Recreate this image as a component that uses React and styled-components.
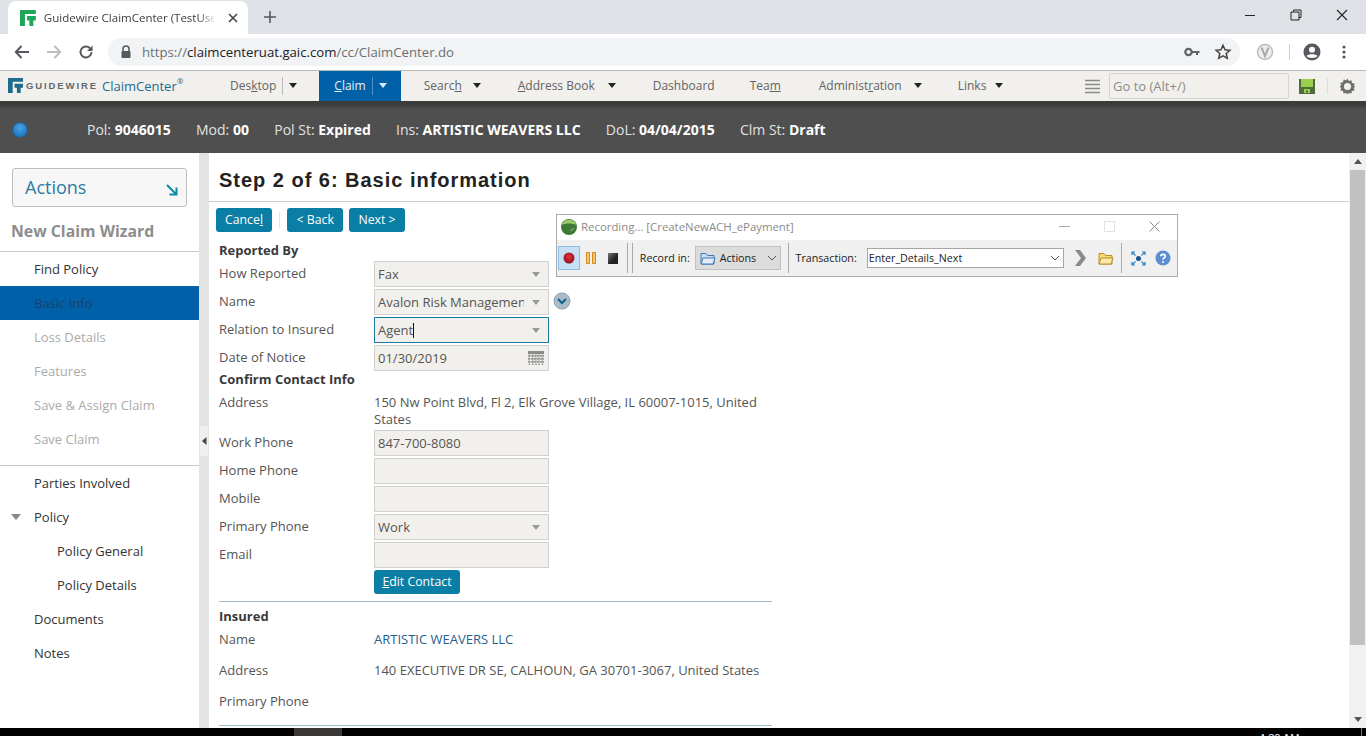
import React from 'react';
import styled, { createGlobalStyle } from 'styled-components';

const Global = createGlobalStyle`
  html, body { margin: 0; padding: 0; height: 736px; overflow: hidden; background: #fff; }
  body { font-family: "Open Sans", "Liberation Sans", sans-serif; font-size: 13px; color: #444; }
  * { box-sizing: border-box; }
  u { text-underline-offset: 1px; }
`;

const Page = styled.div`position: relative; width: 1366px; height: 736px; display: flex; flex-direction: column; overflow: hidden;`;

/* browser chrome */
const TabStrip = styled.div`height: 34px; flex: none; background: #dee1e6; display: flex; align-items: flex-end; padding-left: 8px; position: relative;`;
const Tab = styled.div`width: 240px; height: 33px; background: #fff; border-radius: 8px 8px 0 0; display: flex; align-items: center; padding: 0 10px 0 12px; gap: 8px;`;
const TabTitle = styled.div`width: 172px; white-space: nowrap; overflow: hidden; font-size: 11.5px; color: #3c4043; -webkit-mask-image: linear-gradient(to right, #000 155px, transparent 172px); mask-image: linear-gradient(to right, #000 155px, transparent 172px);`;
const TabClose = styled.div`margin-left: 6px; display: flex;`;
const NewTab = styled.div`margin: 0 0 8px 15px; display: flex; height: 18px;`;
const WinControls = styled.div`margin-left: auto; align-self: flex-start; display: flex; height: 30px; align-items: center; padding-right: 1px;`;
const WinBtn = styled.div`width: 46px; display: flex; justify-content: center;`;

const BrowserBar = styled.div`height: 37px; flex: none; background: #fff; display: flex; align-items: center; padding: 0 0 0 12px; border-bottom: 1px solid #b9b9b9;`;
const NavIcon = styled.div`width: 20px; height: 20px; display: flex; align-items: center; justify-content: center; margin-right: 12px;`;
const Omni = styled.div`width: 1132px; height: 28px; background: #f1f3f4; border-radius: 14px; display: flex; align-items: center; padding: 0 8px 0 12px; margin-left: 0;`;
const Url = styled.div`margin-left: 10px; font-size: 13.2px; color: #6b6f73; white-space: nowrap;  b { font-weight: 400; color: #202124; }`;
const OmniRight = styled.div`margin-left: auto; display: flex; align-items: center; gap: 14px;`;
const ExtArea = styled.div`display: flex; align-items: center; margin-left: 16px;`;
const ExtSep = styled.div`width: 1px; height: 16px; background: #d0d0d0; margin: 0 13px 0 15px;`;

/* app nav */
const AppNav = styled.div`height: 30px; flex: none; background: #f2f0ec; display: flex; align-items: stretch; color: #666;`;
const Brand = styled.div`width: 208px; display: flex; align-items: center; padding: 0 0 1px 8px;`;
const BrandWord = styled.span`margin-left: 3px; font-family: "Liberation Sans", sans-serif; font-weight: 700; font-size: 9.5px; letter-spacing: 1.9px; color: #5d6b73;`;
const BrandProduct = styled.span`margin-left: 4px; font-size: 13px; color: #1d6c8f; white-space: nowrap; sup { font-size: 8px; line-height: 0; position: relative; top: -1px; vertical-align: super; }`;
const NavItem = styled.div`display: flex; align-items: center; padding: 0 ${p => p.$pr ?? 16}px 1px ${p => p.$pl ?? 20}px; background: ${p => (p.$active ? '#0060a8' : 'transparent')}; color: ${p => (p.$active ? '#e6f0f8' : '#636363')}; font-size: 12px; white-space: nowrap;`;
const NavSep = styled.span`width: 1px; height: 18px; margin: 0 6px; background: ${p => (p.$light ? '#4d8fc2' : '#bbb')};`;
const Caret = styled.span`width: 0; height: 0; margin-left: ${p => p.$ml ?? 0}px; border-left: 4.5px solid transparent; border-right: 4.5px solid transparent; border-top: 5px solid ${p => p.$c || '#222'};`;
const NavRight = styled.div`margin-left: auto; display: flex; align-items: center; padding-right: 10px;`;
const GoTo = styled.div`width: 180px; height: 26px; margin: 0 10px 0 9px; border: 1px solid #d6d4d0; border-radius: 2px; padding: 0 3px; display: flex; align-items: center; font-size: 13px; color: #8b8b8b;`;
const ToolSep = styled.div`width: 1px; height: 16px; background: #ddd; margin: 0 11px 0 12px;`;

/* info bar */
const InfoBar = styled.div`height: 52px; flex: none; background: linear-gradient(#3b3b3b 0, #3b3b3b 4px, #444 5px, #4f4f4f 9px); display: flex; align-items: center; gap: 25.3px; padding: 5px 0 0 12px; color: #e2e2e2; font-size: 14px; white-space: nowrap; b { color: #fff; font-weight: 700; }`;
const Dot = styled.div`width: 16px; height: 16px; border-radius: 50%; margin-right: 33.7px; background: radial-gradient(circle at 50% 35%, #4ba3e8, #1f78c4 70%); border: 1px solid #2a5a80;`;

/* main */
const Main = styled.div`flex: 1; min-height: 0; display: flex;`;
const Side = styled.div`width: 199px; flex: none; background: #fff; padding-top: 15px;`;
const ActionsBox = styled.div`width: 175px; height: 39px; margin-left: 12px; background: #f7f7f7; border: 1px solid #bdbdbd; border-radius: 3px; padding: 0 8px 2px 12px; display: flex; align-items: center; justify-content: space-between; font-size: 18px; color: #2b7da0;`;
const WizardTitle = styled.div`margin: 12px 0 0 11px; height: 32px; line-height: 24px; font-size: 15.8px; font-weight: 700; color: #8d8d8d;`;
const SideList = styled.div`border-top: 1px solid #c8c8c8; padding-bottom: 9px; &+& { padding-bottom: 0; }`;
const SideItem = styled.div`height: 34px; display: flex; align-items: center; padding-left: ${p => p.$nested ? 57 : 34}px; position: relative; font-size: 13px; color: ${p => ({ on: '#333', dim: '#aaa', cur: '#1a4468' }[p.$tone] || '#333')}; background: ${p => p.$tone === 'cur' ? '#0060a8' : 'transparent'};`;
const Tri = styled.span`position: absolute; left: 11px; top: 14px; width: 0; height: 0; border-left: 5px solid transparent; border-right: 5px solid transparent; border-top: 6px solid #888;`;
const Splitter = styled.div`width: 10px; flex: none; background: #e3e3e3; display: flex; align-items: center;`;
const Handle = styled.div`width: 8px; height: 30px; margin-left: 1px; background: #f0f0f0; display: flex; align-items: center; justify-content: center;`;
const Content = styled.div`flex: 1; min-width: 0; overflow: hidden; background: #fff;`;
const Title = styled.div`height: 49px; border-bottom: 1px solid #ccc; padding: 16px 0 0 10px; font-family: "Liberation Sans", sans-serif; font-weight: 700; font-size: 20px; line-height: 23px; letter-spacing: 0.98px; color: #222;`;
const Buttons = styled.div`display: flex; align-items: center; padding: 6px 0 0 7px;`;
const Btn = styled.div`height: 24px; padding: 0 ${p => p.$px ?? 9}px 1px; background: #0b7ea6; border-radius: 3px; color: #fff; font-size: 12.3px; display: flex; align-items: center; margin-right: ${p => p.$mr ?? 0}px; white-space: nowrap;`;
const EditBtn = styled(Btn)`width: 86px; justify-content: center;`;
const BtnSep = styled.div`width: 1px; height: 16px; background: #e4e4e4; margin: 0 7px;`;
const Form = styled.div`padding: 7px 0 0 10px; width: 563px;`;
const Section = styled.div`height: ${p => p.$h ?? 22}px; line-height: ${p => p.$h ?? 22}px; font-weight: 700; color: #3a3a3a; font-size: 13px;`;
const Row = styled.div`display: grid; grid-template-columns: 155px 1fr; min-height: ${p => p.$h ?? 28}px; align-items: start;`;
const Label = styled.div`font-size: 13px; line-height: 18px; padding-top: ${p => p.$pt ?? 3}px; color: #555;`;
const Field = styled.div`position: relative; width: 175px; height: 26px; background: #f2f0ec; border: 1px solid ${p => p.$focus ? '#1c7ba0' : '#d2d0cc'}; display: flex; align-items: center; padding-left: 3px; font-size: 13px; color: #555; white-space: nowrap; overflow: hidden;`;
const FieldEnd = styled.div`position: absolute; right: 0; top: 0; bottom: 0; width: 24px; background: #f2f0ec; display: flex; align-items: center; justify-content: center;`;
const Arrow = styled.span`width: 0; height: 0; border-left: 4.5px solid transparent; border-right: 4.5px solid transparent; border-top: 5px solid #999;`;
const Cursor = styled.span`display: inline-block; width: 1px; height: 15px; background: #111;`;
const Value = styled.div`font-size: 13px; line-height: 17px; padding-top: ${p => p.$pt ?? 1}px; color: ${p => p.$link ? '#1f5f8f' : '#555'}; white-space: ${p => p.$wrap ? 'normal' : 'nowrap'};`;
const Rule = styled.div`height: 1px; background: #9db8c6; margin-top: ${p => p.$mt ?? 0}px;`;
const Expander = styled.div`position: absolute; left: 553px; top: 292px;`;

const Scrollbar = styled.div`width: 17px; flex: none; background: #f1f1f1; display: flex; flex-direction: column; align-items: center;`;
const ScrollEnd = styled.div`height: 17px; width: 100%; display: flex; align-items: center; justify-content: center;`;
const ScrollThumb = styled.div`width: 15px; height: 475px; background: #c1c1c1;`;
const ScrollTrack = styled.div`flex: 1;`;
const ArrowUp = styled.span`width: 0; height: 0; border-left: 4.5px solid transparent; border-right: 4.5px solid transparent; border-bottom: 5px solid #555;`;
const ArrowDown = styled.span`width: 0; height: 0; border-left: 4.5px solid transparent; border-right: 4.5px solid transparent; border-top: 5px solid #555;`;

const Taskbar = styled.div`height: 8px; flex: none; background: #000; display: flex; position: relative; overflow: hidden;`;
const TaskItem = styled.div`width: 48px; margin-left: 294px; background: #3a3735;`;
const Clock = styled.div`position: absolute; left: 1259px; top: 3px; font-size: 11px; line-height: 14px; color: #fff; font-family: "Liberation Sans", sans-serif;`;
const TaskEdge = styled.div`position: absolute; left: 1361px; top: 0; bottom: 0; width: 1px; background: #777;`;

/* recorder */
const Recorder = styled.div`position: absolute; left: 556px; top: 214px; width: 622px; height: 63px; background: #fff; border: 1px solid #aaa; display: flex; flex-direction: column;`;
const RecTitle = styled.div`height: 25px; flex: none; display: flex; align-items: center; padding: 0 0 2px 3px; gap: 3px; color: #8a8a8a; font-size: 11.4px; white-space: nowrap;`;
const RecWin = styled.div`margin-left: auto; display: flex; align-items: center;`;
const RecWinBtn = styled.div`width: 45px; display: flex; justify-content: center;`;
const RecBar = styled.div`flex: 1; background: #f0f0f0; display: flex; align-items: center; padding-left: 1px; font-size: 10.7px; color: #222; white-space: nowrap;`;
const RecBtn = styled.div`width: ${p => p.$w ?? 22}px; height: 24px; display: flex; align-items: center; justify-content: center; ${p => p.$on ? 'background:#c6e0f6;border:1px solid #8fbce4;' : ''}`;
const RecSep = styled.div`width: 1px; height: 30px; background: #a8a8a8; margin: 0 ${p => p.$mr ?? 3}px 0 ${p => p.$ml ?? 3}px;`;
const ActionsSelect = styled.div`width: 86px; height: 24px; margin-left: 5px; background: #dcdcdc; border: 1px solid #c2c2c2; display: flex; align-items: center; gap: 4px; padding-left: 4px;`;
const Combo = styled.div`width: 198px; height: 20px; margin-left: 10px; background: #fff; border: 1px solid #a6a6a6; display: flex; align-items: center; padding: 0 3px 0 1px; justify-content: space-between;`;

const Key = () => <svg width="16" height="10" viewBox="0 0 16 10"><circle cx="4.5" cy="5" r="3.2" fill="none" stroke="#5f6368" strokeWidth="2.2" /><path d="M8 4h7.5v2H14v2h-2V6H8z" fill="#5f6368" /></svg>;

const Logo = ({ size, c }) => (
  <svg width={size} height={size} viewBox="0 0 16 16"><path d="M0 0H16V4H5V16H0Z M7 6H16V10.500H13.500V16H9.500V10.500H7Z" fill={c} /></svg>
);

export default function App() {
  return (
    <Page>
      <Global />
      <TabStrip>
        <Tab>
          <Logo size={16} c="#1fa659" />
          <TabTitle>Guidewire ClaimCenter (TestUser)</TabTitle>
          <TabClose><svg width="10" height="10" viewBox="0 0 10 10"><path d="M1 1l8 8M9 1l-8 8" stroke="#444" strokeWidth="1.6" /></svg></TabClose>
        </Tab>
        <NewTab><svg width="14" height="14" viewBox="0 0 14 14" style={{ marginTop: 2 }}><path d="M7 1v12M1 7h12" stroke="#55585c" strokeWidth="1.6" /></svg></NewTab>
        <WinControls>
          <WinBtn><svg width="12" height="12" viewBox="0 0 12 12"><path d="M1 6.500h10" stroke="#222" /></svg></WinBtn>
          <WinBtn><svg width="12" height="12" viewBox="0 0 12 12"><path d="M3.500 2.500V1h7.500v7.500H9M1 3h8v8H1z" fill="none" stroke="#222" /></svg></WinBtn>
          <WinBtn><svg width="12" height="12" viewBox="0 0 12 12"><path d="M1 1l10 10M11 1L1 11" stroke="#222" strokeWidth="1.1" /></svg></WinBtn>
        </WinControls>
      </TabStrip>

      <BrowserBar>
        <NavIcon><svg width="16" height="14" viewBox="0 0 16 14"><path d="M15 7H2M7.500 1L1.800 7l5.700 6" fill="none" stroke="#55585c" strokeWidth="2" /></svg></NavIcon>
        <NavIcon><svg width="16" height="14" viewBox="0 0 16 14"><path d="M1 7h13M8.500 1l5.700 6-5.700 6" fill="none" stroke="#bcbec1" strokeWidth="2" /></svg></NavIcon>
        <NavIcon><svg width="16" height="16" viewBox="0 0 16 16"><path d="M13.500 8a5.500 5.500 0 1 1-1.600-3.900L14 6" fill="none" stroke="#55585c" strokeWidth="1.900" /><path d="M14.500 1.500v5.500H9z" fill="#55585c" /></svg></NavIcon>
        <Omni>
          <svg width="12" height="14" viewBox="0 0 12 14"><path d="M3 6V4a3 3 0 0 1 6 0v2" fill="none" stroke="#55585c" strokeWidth="1.500" /><rect x="1.500" y="6" width="9" height="7" rx="1" fill="#55585c" /></svg>
          <Url>https://<b>claimcenteruat.gaic.com</b>/cc/ClaimCenter.do</Url>
          <OmniRight>
            <Key />
            <svg width="18" height="18" viewBox="0 0 24 24"><path d="M12 3l2.700 6 6.500.7-4.900 4.300 1.400 6.400L12 17.100l-5.700 3.300 1.400-6.400L2.800 9.700 9.300 9z" fill="none" stroke="#444" strokeWidth="2" /></svg>
          </OmniRight>
        </Omni>
        <ExtArea>
          <svg width="18" height="18" viewBox="0 0 18 18"><circle cx="9" cy="9" r="7.500" fill="#eee" stroke="#bbb" strokeWidth="1.500" /><path d="M5.500 4.500L9 13l3.500-8.500" fill="none" stroke="#aaa" strokeWidth="2" /></svg>
          <ExtSep />
          <svg width="18" height="18" viewBox="0 0 18 18"><circle cx="9" cy="9" r="8.500" fill="#55585c" /><circle cx="9" cy="6.800" r="3" fill="#fff" /><path d="M3.500 13c1.500-2.500 9.500-2.500 11 0-1.500 2.600-9.500 2.600-11 0z" fill="#fff" /></svg>
          <svg width="4" height="14" viewBox="0 0 4 14" style={{ marginLeft: 21 }}><circle cx="2" cy="2" r="1.600" fill="#55585c" /><circle cx="2" cy="7" r="1.600" fill="#55585c" /><circle cx="2" cy="12" r="1.600" fill="#55585c" /></svg>
        </ExtArea>
      </BrowserBar>

      <AppNav>
        <Brand>
          <Logo size={15} c="#1d6c8f" />
          <BrandWord>GUIDEWIRE</BrandWord>
          <BrandProduct>ClaimCenter<sup>®</sup></BrandProduct>
        </Brand>
        <NavItem $pl={22} $pr={22}><span>Des<u>k</u>top</span><NavSep /><Caret /></NavItem>
        <NavItem $active $pl={15} $pr={14}><span><u>C</u>laim</span><NavSep $light /><Caret $c="#dcecf8" /></NavItem>
        <NavItem $pl={23} $pr={17}><span>Searc<u>h</u></span><Caret $ml={11} /></NavItem>
        <NavItem $pr={17}><span><u>A</u>ddress Book</span><Caret $ml={13} /></NavItem>
        <NavItem $pr={16}><span>Dashboard</span></NavItem>
        <NavItem $pl={19} $pr={19}><span>Tea<u>m</u></span></NavItem>
        <NavItem $pl={19} $pr={16}><span>Administ<u>r</u>ation</span><Caret $ml={12} /></NavItem>
        <NavItem><span>Links</span><Caret $ml={9} /></NavItem>
        <NavRight>
          <svg width="15" height="15" viewBox="0 0 15 15"><path d="M0 1.500h15M0 5.500h15M0 9.500h15M0 13.500h15" stroke="#8a8a8a" strokeWidth="1.500" /></svg>
          <GoTo>Go to (Alt+/)</GoTo>
          <svg width="16" height="16" viewBox="0 0 16 16"><path d="M0 1h16v15H0z" fill="#4f6a3c" /><path d="M2 1h12v8H2z" fill="#9bd04f" /><path d="M5 11h6v4H5z" fill="#9bd04f" /><path d="M7 12.500h2v2H7z" fill="#4f6a3c" /></svg>
          <ToolSep />
          <svg width="17" height="17" viewBox="0 0 24 24"><path d="M12 1l2 3.200 3.500-1 .8 3.700 3.700.8-1 3.500L23 12l-2 2 1 3.500-3.700.8-.8 3.700-3.500-1L12 23l-2-2-3.500 1-.8-3.700L2 17.500 3 14l-2-2 2-1.800-1-3.500 3.700-.8.800-3.700 3.500 1z" fill="#707070" /><circle cx="12" cy="12" r="5" fill="#f2f0ec" /></svg>
        </NavRight>
      </AppNav>

      <InfoBar>
        <Dot />
        <span>Pol: <b>9046015</b></span>
        <span>Mod: <b>00</b></span>
        <span>Pol St: <b>Expired</b></span>
        <span>Ins: <b>ARTISTIC WEAVERS LLC</b></span>
        <span>DoL: <b>04/04/2015</b></span>
        <span>Clm St: <b>Draft</b></span>
      </InfoBar>

      <Main>
        <Side>
          <ActionsBox>Actions
            <svg width="13" height="13" viewBox="0 0 13 13" style={{ marginTop: 5 }}><path d="M2 2l9 9M11.500 4.500v7h-7" fill="none" stroke="#0c8aa8" strokeWidth="2" /></svg>
          </ActionsBox>
          <WizardTitle>New Claim Wizard</WizardTitle>
          <SideList>
            <SideItem $tone="on">Find Policy</SideItem>
            <SideItem $tone="cur">Basic Info</SideItem>
            <SideItem $tone="dim">Loss Details</SideItem>
            <SideItem $tone="dim">Features</SideItem>
            <SideItem $tone="dim">Save &amp; Assign Claim</SideItem>
            <SideItem $tone="dim">Save Claim</SideItem>
          </SideList>
          <SideList>
            <SideItem $tone="on">Parties Involved</SideItem>
            <SideItem $tone="on"><Tri />Policy</SideItem>
            <SideItem $tone="on" $nested>Policy General</SideItem>
            <SideItem $tone="on" $nested>Policy Details</SideItem>
            <SideItem $tone="on">Documents</SideItem>
            <SideItem $tone="on">Notes</SideItem>
          </SideList>
        </Side>
        <Splitter>
          <Handle><svg width="5" height="8" viewBox="0 0 5 8"><path d="M4.500 0v8L0 4z" fill="#444" /></svg></Handle>
        </Splitter>
        <Content>
          <Title>Step 2 of 6: Basic information</Title>
          <Buttons>
            <Btn $px={9}>Cance<u>l</u></Btn>
            <BtnSep />
            <Btn $px={9.5} $mr={6}>&lt; Back</Btn>
            <Btn>Next &gt;</Btn>
          </Buttons>
          <Form>
            <Section>Reported By</Section>
            <Row><Label>How Reported</Label><Field>Fax<FieldEnd><Arrow /></FieldEnd></Field></Row>
            <Row><Label>Name</Label><Field>Avalon Risk Management<FieldEnd><Arrow /></FieldEnd></Field></Row>
            <Row><Label>Relation to Insured</Label><Field $focus>Agent<Cursor /><FieldEnd><Arrow /></FieldEnd></Field></Row>
            <Row $h={26}><Label>Date of Notice</Label><Field>01/30/2019<FieldEnd>
              <svg width="16" height="14" viewBox="0 0 16 14"><path d="M0 0h16v3H0z" fill="#8a8a8a" /><path d="M0 5h16M0 8h16M0 11h16M1.500 3.500v10.500M5 3.500v10.500M8 3.500v10.500M11 3.500v10.500M14.500 3.500v10.500" stroke="#8f8f8f" strokeWidth="1.500" strokeDasharray="2 1" /></svg>
            </FieldEnd></Field></Row>
            <Section $h={16}>Confirm Contact Info</Section>
            <Row $h={43}><Label $pt={6}>Address</Label><Value $pt={7} $wrap>150 Nw Point Blvd, Fl 2, Elk Grove Village, IL 60007-1015, United States</Value></Row>
            <Row><Label>Work Phone</Label><Field>847-700-8080</Field></Row>
            <Row><Label>Home Phone</Label><Field /></Row>
            <Row><Label>Mobile</Label><Field /></Row>
            <Row><Label>Primary Phone</Label><Field>Work<FieldEnd><Arrow /></FieldEnd></Field></Row>
            <Row><Label>Email</Label><Field /></Row>
            <Row $h={24}><span /><EditBtn><span><u>E</u>dit Contact</span></EditBtn></Row>
            <Rule $mt={7} />
            <Section $h={28}>Insured</Section>
            <Row $h={31}><Label $pt={0}>Name</Label><Value $link>ARTISTIC WEAVERS LLC</Value></Row>
            <Row $h={31}><Label $pt={0}>Address</Label><Value>140 EXECUTIVE DR SE, CALHOUN, GA 30701-3067, United States</Value></Row>
            <Row $h={33}><Label $pt={0}>Primary Phone</Label><span /></Row>
            <Rule />
          </Form>
        </Content>
        <Scrollbar>
          <ScrollEnd><ArrowUp /></ScrollEnd>
          <ScrollThumb />
          <ScrollTrack />
          <ScrollEnd><ArrowDown /></ScrollEnd>
        </Scrollbar>
      </Main>

      <Taskbar>
        <TaskItem />
        <Clock>4:30 AM</Clock>
        <TaskEdge />
      </Taskbar>

      <Expander>
        <svg width="18" height="18" viewBox="0 0 18 18"><circle cx="9" cy="9" r="8" fill="#a9bcc8" stroke="#8ea0ac" /><path d="M5 7l4 4 4-4" fill="none" stroke="#135f8f" strokeWidth="2" /></svg>
      </Expander>

      <Recorder>
        <RecTitle>
          <svg width="18" height="18" viewBox="0 0 18 18"><circle cx="9" cy="9" r="8" fill="#3f7a35" /><path d="M1.500 7a8 8 0 0 1 15 0C12 5 6 5 1.500 7z" fill="#9cc66a" /><path d="M9 13c2-.5 4-2 5-4-.500 2.500-2.500 4-5 4z" fill="#e8e8e8" /></svg>
          Recording... [CreateNewACH_ePayment]
          <RecWin>
            <RecWinBtn><svg width="11" height="11" viewBox="0 0 11 11"><path d="M0 5.500h11" stroke="#aaa" /></svg></RecWinBtn>
            <RecWinBtn><svg width="11" height="11" viewBox="0 0 11 11"><path d="M.500.500h10v10H.500z" fill="none" stroke="#e2e2e2" /></svg></RecWinBtn>
            <RecWinBtn><svg width="11" height="11" viewBox="0 0 11 11"><path d="M.500.500l10 10M10.500.500l-10 10" stroke="#888" /></svg></RecWinBtn>
          </RecWin>
        </RecTitle>
        <RecBar>
          <RecBtn $on>
            <svg width="12" height="12" viewBox="0 0 12 12"><defs><radialGradient id="recDot" cx="50%" cy="40%" r="60%"><stop offset="0" stopColor="#e8323c" /><stop offset="1" stopColor="#8c1218" /></radialGradient></defs><circle cx="6" cy="6" r="5.500" fill="url(#recDot)" /></svg>
          </RecBtn>
          <RecBtn><svg width="10" height="12" viewBox="0 0 10 12"><path d="M.500.500h3v11h-3zM6.500.500h3v11h-3z" fill="#f5c36a" stroke="#d48a1c" /></svg></RecBtn>
          <RecBtn>
            <svg width="10" height="11" viewBox="0 0 10 11"><defs><linearGradient id="stopFill" x1="0" y1="0" x2="1" y2="1"><stop offset="0" stopColor="#777" /><stop offset=".6" stopColor="#222" /></linearGradient></defs><path d="M0 0h10v11H0z" fill="url(#stopFill)" /></svg>
          </RecBtn>
          <RecSep $ml={3} $mr={4} />
          <RecSep $ml={0} $mr={7} />
          <span>Record in:</span>
          <ActionsSelect>
            <svg width="16" height="13" viewBox="0 0 16 13"><path d="M1 12V1.500h5l1.500 2H14V12z" fill="#c9dcf3" stroke="#3f78b8" /><path d="M1 12l2-6h12l-2 6z" fill="#e2edf9" stroke="#3f78b8" /></svg>
            <span>Actions</span>
            <svg width="10" height="6" viewBox="0 0 10 6" style={{ marginLeft: 7 }}><path d="M1 1l4 4 4-4" fill="none" stroke="#555" /></svg>
          </ActionsSelect>
          <RecSep $ml={7} $mr={7} />
          <span>Transaction:</span>
          <Combo>
            <span>Enter_Details_Next</span>
            <svg width="10" height="6" viewBox="0 0 10 6"><path d="M1 1l4 4 4-4" fill="none" stroke="#555" /></svg>
          </Combo>
          <RecBtn $w={33}><svg width="11" height="16" viewBox="0 0 11 16"><path d="M0 0l5 0 6 8-6 8H0l6-8z" fill="#8a8a8a" /></svg></RecBtn>
          <RecBtn $w={17}><svg width="16" height="13" viewBox="0 0 16 13"><path d="M1 12V1.500h5l1.500 2H14V12z" fill="#f5d773" stroke="#b8902c" /><path d="M1 12l2-6h12l-2 6z" fill="#fbe9a5" stroke="#b8902c" /></svg></RecBtn>
          <RecSep $ml={7} $mr={5} />
          <RecBtn $w={22}><svg width="15" height="15" viewBox="0 0 15 15"><circle cx="7.500" cy="7.500" r="2.500" fill="#17548f" /><path d="M1 1l3.500 3.500M14 1l-3.500 3.500M1 14l3.500-3.500M14 14l-3.500-3.500M1 4V1h3M11 1h3v3M1 11v3h3M14 11v3h-3" fill="none" stroke="#2f86c8" strokeWidth="1.200" /></svg></RecBtn>
          <RecBtn $w={28}><svg width="16" height="16" viewBox="0 0 16 16"><circle cx="8" cy="8" r="7.500" fill="#5b8fd0" /><path d="M5.800 6.200C6 3.800 10.200 3.800 10.200 6.200c0 1.600-2.200 1.700-2.200 3.300" fill="none" stroke="#fff" strokeWidth="1.700" /><circle cx="8" cy="12" r="1.100" fill="#fff" /></svg></RecBtn>
        </RecBar>
      </Recorder>
    </Page>
  );
}
